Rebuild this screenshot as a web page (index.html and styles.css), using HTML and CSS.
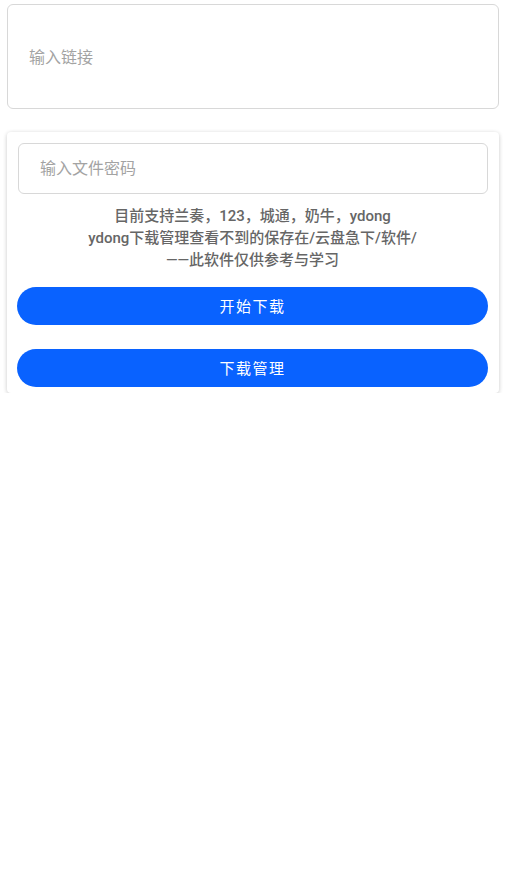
FILE: index.html
```html
<!DOCTYPE html>
<html lang="zh">
<head>
<meta charset="utf-8">
<title>下载</title>
<link rel="stylesheet" href="styles.css">
</head>
<body>
<div class="page">
  <div class="link-input"><span class="placeholder">输入链接</span></div>
  <div class="card">
    <div class="pwd-input"><span class="placeholder">输入文件密码</span></div>
    <div class="notice">
      <div>目前支持兰奏，123，城通，奶牛，ydong</div>
      <div>ydong下载管理查看不到的保存在/云盘急下/软件/</div>
      <div>——此软件仅供参考与学习</div>
    </div>
    <div class="btn btn-first">开始下载</div>
    <div class="btn btn-second">下载管理</div>
  </div>
</div>
</body>
</html>
```
FILE: styles.css
```css
html, body {
  margin: 0;
  padding: 0;
  background: #ffffff;
}
body {
  font-family: Roboto, "Noto Sans CJK SC", sans-serif;
}
.page {
  padding: 4px 8px 0 7px;
  display: flex;
  flex-direction: column;
  gap: 23px;
}
.link-input {
  height: 105px;
  box-sizing: border-box;
  border: 1px solid #d8d8d8;
  border-radius: 6px;
  display: flex;
  align-items: center;
  padding-left: 21px;
  padding-bottom: 2px;
}
.placeholder {
  font-size: 16px;
  color: #a3a3a3;
}
.card {
  background: #fff;
  border-radius: 4px;
  box-shadow: 0 1px 4px rgba(0, 0, 0, 0.22);
  padding: 11px 11px 6px 10px;
  display: flex;
  flex-direction: column;
}
.pwd-input {
  height: 51px;
  box-sizing: border-box;
  margin-left: 1px;
  border: 1px solid #d8d8d8;
  border-radius: 6px;
  display: flex;
  align-items: center;
  padding-left: 21px;
  padding-bottom: 3px;
}
.notice {
  margin-top: 11px;
  text-align: center;
  font-size: 15px;
  line-height: 22px;
  font-weight: 500;
  color: #666666;
}
.btn {
  height: 38px;
  border-radius: 19px;
  background: #0962ff;
  color: #ffffff;
  font-size: 15px;
  letter-spacing: 1.5px;
  display: flex;
  align-items: center;
  justify-content: center;
  padding-bottom: 2px;
  box-sizing: border-box;
}
.btn-first {
  margin-top: 16px;
}
.btn-second {
  margin-top: 24px;
}
```
